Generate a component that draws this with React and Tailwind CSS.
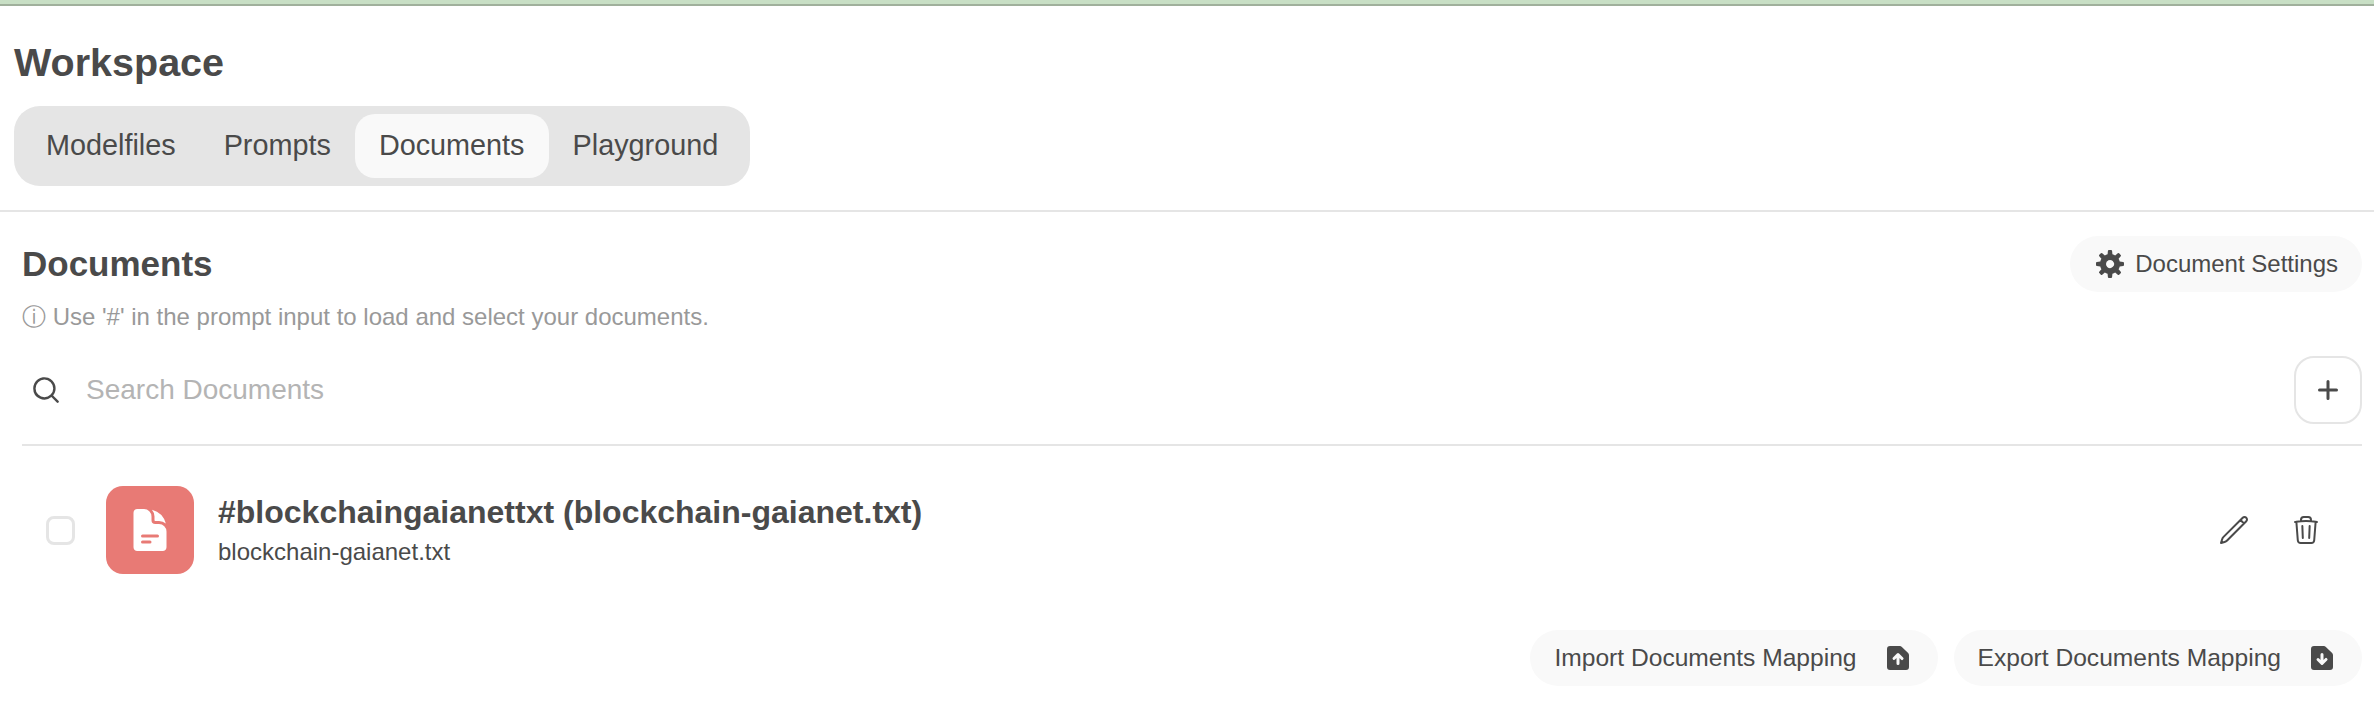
const tabs = ['Modelfiles', 'Prompts', 'Documents', 'Playground'];

function Gear() {
  return (
    <svg viewBox="0 0 16 16" fill="currentColor" className="size-8">
      <path
        fillRule="evenodd"
        clipRule="evenodd"
        d="M6.955 1.45A.5.5 0 0 1 7.452 1h1.096a.5.5 0 0 1 .497.45l.17 1.699c.484.12.94.312 1.356.562l1.321-1.081a.5.5 0 0 1 .67.033l.774.775a.5.5 0 0 1 .034.67l-1.08 1.32c.25.417.44.873.561 1.357l1.699.17a.5.5 0 0 1 .45.497v1.096a.5.5 0 0 1-.45.497l-1.699.17c-.12.484-.312.94-.562 1.356l1.082 1.322a.5.5 0 0 1-.034.67l-.774.774a.5.5 0 0 1-.67.033l-1.322-1.08c-.416.25-.872.44-1.356.561l-.17 1.699a.5.5 0 0 1-.497.45H7.452a.5.5 0 0 1-.497-.45l-.17-1.699a4.973 4.973 0 0 1-1.356-.562L4.108 13.37a.5.5 0 0 1-.67-.033l-.774-.775a.5.5 0 0 1-.034-.67l1.08-1.32a4.971 4.971 0 0 1-.561-1.357l-1.699-.17A.5.5 0 0 1 1 8.548V7.452a.5.5 0 0 1 .45-.497l1.699-.17c.12-.484.312-.94.562-1.356L2.629 4.107a.5.5 0 0 1 .034-.67l.774-.774a.5.5 0 0 1 .67-.033L5.43 3.71a4.97 4.97 0 0 1 1.356-.561l.17-1.699ZM6 8c0 .538.212 1.026.558 1.385l.057.057a2 2 0 0 0 2.828-2.828l-.058-.056A2 2 0 0 0 6 8Z"
      />
    </svg>
  );
}

function FileArrow({ d }) {
  return (
    <svg viewBox="0 0 16 16" fill="currentColor" className="size-8">
      <path fillRule="evenodd" clipRule="evenodd" d={d} />
    </svg>
  );
}

const importPath = 'M4 2a1.5 1.5 0 0 0-1.5 1.5v9A1.5 1.5 0 0 0 4 14h8a1.5 1.5 0 0 0 1.5-1.5V6.621a1.5 1.5 0 0 0-.44-1.06L9.94 2.439A1.5 1.5 0 0 0 8.878 2H4Zm4 9.5a.75.75 0 0 1-.75-.75V8.06l-.72.72a.75.75 0 0 1-1.06-1.06l2-2a.75.75 0 0 1 1.06 0l2 2a.75.75 0 1 1-1.06 1.06l-.72-.72v2.69a.75.75 0 0 1-.75.75Z';
const exportPath = 'M4 2a1.5 1.5 0 0 0-1.5 1.5v9A1.5 1.5 0 0 0 4 14h8a1.5 1.5 0 0 0 1.5-1.5V6.621a1.5 1.5 0 0 0-.44-1.06L9.94 2.439A1.5 1.5 0 0 0 8.878 2H4Zm4 3.5a.75.75 0 0 1 .75.75v2.69l.72-.72a.75.75 0 1 1 1.06 1.06l-2 2a.75.75 0 0 1-1.06 0l-2-2a.75.75 0 0 1 1.06-1.06l.72.72V6.25A.75.75 0 0 1 8 5.5Z';

export default function App() {
  return (
    <div className="h-[710px] overflow-hidden bg-white font-['Liberation_Sans',Arial,sans-serif] text-[#4a4a4a]">
      {/* top strip */}
      <div className="h-1 bg-[#c8dfc5]" />
      <div className="h-0.5 bg-[#a0b09c]" />

      {/* Workspace header */}
      <div className="px-3.5 pt-[33px]">
        <h1 className="text-[39.5px] leading-[46px] font-bold">Workspace</h1>
        <div className="mt-[21px] flex h-20 w-fit items-center rounded-[26px] bg-[#e5e5e5] p-2">
          {tabs.map((tab) => (
            <button
              key={tab}
              className={`h-16 rounded-[20px] px-6 text-[28.8px] ${tab === 'Documents' ? 'bg-[#f9f9f9]' : ''}`}
            >
              {tab}
            </button>
          ))}
        </div>
      </div>
      <div className="mt-6 h-0.5 bg-[#e5e5e5]" />

      <div className="pr-3 pl-[22px]">
        {/* Title row */}
        <div className="mt-6 flex items-start justify-between">
          <div>
            <h2 className="mt-2 text-[35px] leading-10 font-bold">Documents</h2>
            <p className="mt-[17px] text-2xl leading-8 text-[#999999]">ⓘ Use '#' in the prompt input to load and select your documents.</p>
          </div>
          <button className="flex h-14 items-center gap-[9px] rounded-[28px] bg-[#f9f9f9] px-6 text-2xl">
            <Gear />
            Document Settings
          </button>
        </div>

        {/* Search */}
        <div className="mt-[23px] flex items-center justify-between border-b-2 border-[#e5e5e5] pb-5">
          <div className="flex items-center gap-6 pl-2">
            <svg viewBox="0 0 20 20" fill="currentColor" className="size-8">
              <path fillRule="evenodd" clipRule="evenodd" d="M9 3.5a5.5 5.5 0 100 11 5.5 5.5 0 000-11zM2 9a7 7 0 1112.452 4.391l3.328 3.329a.75.75 0 11-1.06 1.06l-3.329-3.328A7 7 0 012 9z" />
            </svg>
            <span className="text-[28px] text-[#b4b4b4]">Search Documents</span>
          </div>
          <button className="flex size-[68px] items-center justify-center rounded-[20px] border-2 border-[#e5e5e5]">
            <svg viewBox="0 0 16 16" fill="currentColor" className="size-8">
              <path d="M8.75 3.75a.75.75 0 0 0-1.5 0v3.5h-3.5a.75.75 0 0 0 0 1.5h3.5v3.5a.75.75 0 0 0 1.5 0v-3.5h3.5a.75.75 0 0 0 0-1.5h-3.5v-3.5Z" />
            </svg>
          </button>
        </div>

        {/* Document row */}
        <div className="mt-10 flex items-center justify-between">
          <div className="flex items-center">
            <div className="ml-6 size-[29px] rounded-lg border-[3px] border-[#e5e5e5]" />
            <div className="ml-[31px] flex size-[88px] items-center justify-center rounded-[17px] bg-[#e87a75] text-white">
              <svg viewBox="0 0 24 24" fill="currentColor" className="size-12">
                <path fillRule="evenodd" clipRule="evenodd" d="M5.625 1.5c-1.036 0-1.875.84-1.875 1.875v17.25c0 1.035.84 1.875 1.875 1.875h12.75c1.035 0 1.875-.84 1.875-1.875V12.75A3.75 3.75 0 0 0 16.5 9h-1.875a1.875 1.875 0 0 1-1.875-1.875V5.25A3.75 3.75 0 0 0 9 1.5H5.625ZM7.5 15a.75.75 0 0 1 .75-.75h7.5a.75.75 0 0 1 0 1.5h-7.5A.75.75 0 0 1 7.5 15Zm.75 2.25a.75.75 0 0 0 0 1.5H12a.75.75 0 0 0 0-1.5H8.25Z" />
                <path d="M12.971 1.816A5.23 5.23 0 0 1 14.25 5.25v1.875c0 .207.168.375.375.375H16.5a5.23 5.23 0 0 1 3.434 1.279 9.768 9.768 0 0 0-6.963-6.963Z" />
              </svg>
            </div>
            <div className="ml-6">
              <div className="text-[32px] leading-10 font-bold">#blockchaingaianettxt (blockchain-gaianet.txt)</div>
              <div className="mt-1 text-2xl leading-8">blockchain-gaianet.txt</div>
            </div>
          </div>
          <div className="mr-10 flex items-center gap-10">
            <svg viewBox="0 0 24 24" fill="none" stroke="currentColor" strokeWidth="1.5" className="size-8">
              <path strokeLinecap="round" strokeLinejoin="round" d="m16.862 4.487 1.687-1.688a1.875 1.875 0 1 1 2.652 2.652L6.832 19.82a4.5 4.5 0 0 1-1.897 1.13l-2.685.8.8-2.685a4.5 4.5 0 0 1 1.13-1.897L16.863 4.487Zm0 0L19.5 7.125" />
            </svg>
            <svg viewBox="0 0 24 24" fill="none" stroke="currentColor" strokeWidth="1.5" className="size-8">
              <path strokeLinecap="round" strokeLinejoin="round" d="m14.74 9-.346 9m-4.788 0L9.26 9m9.968-3.21c.342.052.682.107 1.022.166m-1.022-.165L18.16 19.673a2.25 2.25 0 0 1-2.244 2.077H8.084a2.25 2.25 0 0 1-2.244-2.077L4.772 5.79m14.456 0a48.108 48.108 0 0 0-3.478-.397m-12 .562c.34-.059.68-.114 1.022-.165m0 0a48.11 48.11 0 0 1 3.478-.397m7.5 0v-.916c0-1.18-.91-2.164-2.09-2.201a51.964 51.964 0 0 0-3.32 0c-1.18.037-2.09 1.022-2.09 2.201v.916m7.5 0a48.667 48.667 0 0 0-7.5 0" />
            </svg>
          </div>
        </div>

        {/* Import and export */}
        <div className="mt-14 flex justify-end gap-4 text-[24.6px]">
          <button className="flex h-14 items-center gap-[25px] rounded-[28px] bg-[#f9f9f9] px-6">
            Import Documents Mapping
            <FileArrow d={importPath} />
          </button>
          <button className="flex h-14 items-center gap-[25px] rounded-[28px] bg-[#f9f9f9] px-6">
            Export Documents Mapping
            <FileArrow d={exportPath} />
          </button>
        </div>
      </div>
    </div>
  );
}
